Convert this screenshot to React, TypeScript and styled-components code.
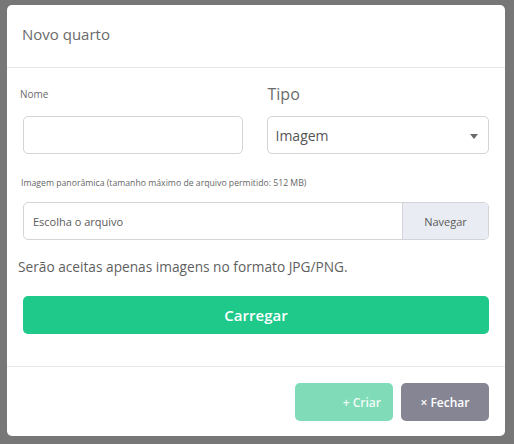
import React from "react";
import styled, { createGlobalStyle } from "styled-components";

const GlobalStyle = createGlobalStyle`
body {
  margin: 0;
  background-color: #777777;
  font-family: "Open Sans", "Liberation Sans", sans-serif;
}
`;

const Backdrop = styled.div`
  width: 514px;
  height: 444px;
  padding: 5px 0 0 7px;
  box-sizing: border-box;
`;

const Modal = styled.div`
  width: 498px;
  height: 431px;
  background: #ffffff;
  border-radius: 5px;
  display: flex;
  flex-direction: column;
`;

const Header = styled.div`
  height: 63px;
  box-sizing: border-box;
  padding: 18px 15px 0;
  border-bottom: 1px solid #e3e6ea;
`;

const Title = styled.h5`
  margin: 0;
  font-size: 15px;
  line-height: 22px;
  font-weight: 400;
  color: #6b6b6b;
`;

const Body = styled.div`
  padding: 15px 16px 0 13px;
  height: 299px;
  box-sizing: border-box;
  border-bottom: 1px solid #e3e6ea;
`;

const Row = styled.div`
  display: grid;
  grid-template-columns: 1fr 1fr;
  column-gap: 24px;
`;

const Field = styled.div`
  display: flex;
  flex-direction: column;
`;

const Label = styled.label<{ $size: number; $indent?: number }>`
  font-size: ${(p) => p.$size}px;
  color: #6b6b6b;
  height: 22px;
  display: flex;
  align-items: center;
  padding-left: ${(p) => p.$indent ?? 0}px;
`;

const Input = styled.div`
  margin: 11px 0 0 3px;
  height: 38px;
  border: 1px solid #d2d4d8;
  border-radius: 5px;
  box-sizing: border-box;
`;

const Select = styled.div`
  margin-top: 11px;
  height: 38px;
  border: 1px solid #d2d4d8;
  border-radius: 5px;
  box-sizing: border-box;
  display: flex;
  align-items: center;
  justify-content: space-between;
  padding: 0 10px 0 8px;
  font-size: 14px;
  color: #555;
`;

const Caret = styled.span`
  width: 0;
  height: 0;
  border-left: 4.5px solid transparent;
  border-right: 4.5px solid transparent;
  border-top: 5px solid #6b6b6b;
  margin-top: 2px;
`;

const Small = styled.div`
  margin-top: 23px;
  font-size: 8.7px;
  color: #666;
  padding-left: 1px;
`;

const FileBox = styled.div`
  margin: 13px 0 0 3px;
  height: 38px;
  border: 1px solid #d2d4d8;
  border-radius: 5px;
  box-sizing: border-box;
  display: flex;
  overflow: hidden;
  font-size: 11px;
  color: #5a5a5a;
`;

const FileText = styled.div`
  flex: 1;
  display: flex;
  align-items: center;
  padding-left: 9px;
`;

const Browse = styled.div`
  width: 85px;
  background: #e9ecf3;
  border-left: 1px solid #d2d4d8;
  display: flex;
  align-items: center;
  justify-content: center;
`;

const Note = styled.p`
  margin: 17px 0 0 -2px;
  font-size: 13.7px;
  color: #5f5f5f;
`;

const Upload = styled.button`
  margin: 20px 0 0 3px;
  width: calc(100% - 3px);
  height: 38px;
  border: none;
  border-radius: 5px;
  background: #1fc98a;
  color: #fff;
  font-family: inherit;
  font-size: 15px;
  font-weight: 600;
`;

const Footer = styled.div`
  flex: 1;
  display: flex;
  justify-content: flex-end;
  align-items: flex-start;
  gap: 8px;
  padding: 16px 16px 0 0;
`;

const FootButton = styled.button<{ $bg: string; $w: number }>`
  width: ${(p) => p.$w}px;
  height: 38px;
  border: none;
  border-radius: 5px;
  background: ${(p) => p.$bg};
  color: #fff;
  font-family: inherit;
  font-size: 12px;
  font-weight: 600;
`;

const CreateButton = styled(FootButton)`
  text-align: right;
  padding-right: 12px;
  color: #f2fbf7;
`;

export default function App() {
  return (
    <Backdrop>
      <GlobalStyle />
      <Modal>
        <Header>
          <Title>Novo quarto</Title>
        </Header>
        <Body>
          <Row>
            <Field>
              <Label $size={10}>Nome</Label>
              <Input />
            </Field>
            <Field>
              <Label $size={16} $indent={1}>Tipo</Label>
              <Select>
                Imagem
                <Caret />
              </Select>
            </Field>
          </Row>
          <Small>Imagem panorâmica (tamanho máximo de arquivo permitido: 512 MB)</Small>
          <FileBox>
            <FileText>Escolha o arquivo</FileText>
            <Browse>Navegar</Browse>
          </FileBox>
          <Note>Serão aceitas apenas imagens no formato JPG/PNG.</Note>
          <Upload>Carregar</Upload>
        </Body>
        <Footer>
          <CreateButton $bg="#80dcb8" $w={98}>+ Criar</CreateButton>
          <FootButton $bg="#858594" $w={88}>× Fechar</FootButton>
        </Footer>
      </Modal>
    </Backdrop>
  );
}
